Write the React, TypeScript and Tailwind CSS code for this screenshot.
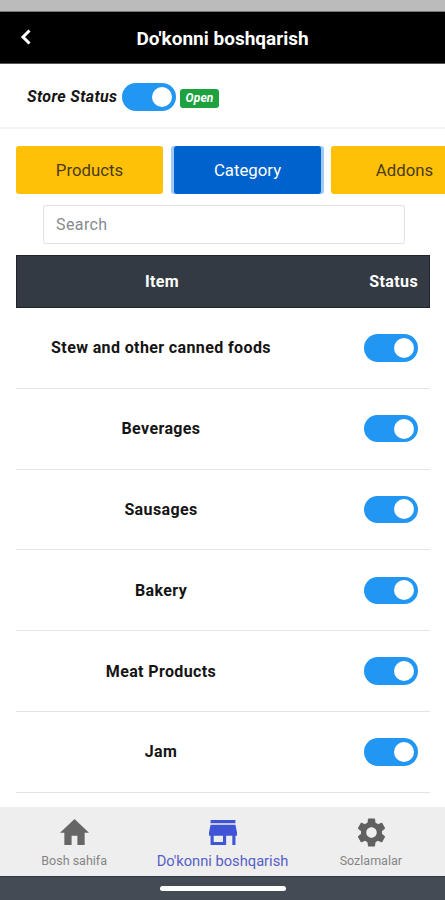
import React from "react";

const items = [
  "Stew and other canned foods",
  "Beverages",
  "Sausages",
  "Bakery",
  "Meat Products",
  "Jam",
];

function Toggle() {
  return (
    <span className="flex h-[27.5px] w-[54px] shrink-0 items-center justify-end rounded-full bg-[#2196f3] pr-[3.5px]">
      <span className="h-5 w-5 rounded-full bg-white" />
    </span>
  );
}

export default function App() {
  return (
    <div className="flex h-[900px] w-[445px] flex-col overflow-hidden bg-white font-['Roboto',sans-serif] text-[#151515]">
      <div className="h-3 shrink-0 border-b border-[#777] bg-[#bbbbbb]" />
      <header className="grid h-[52px] shrink-0 grid-cols-[58px_1fr_58px] items-center border-b border-[#555] bg-black">
        <svg viewBox="0 0 12 18" className="ml-5 h-[18px] w-3 -translate-y-[1px]" fill="none" stroke="#fff" strokeWidth="3">
          <path d="M9.5 2.5 3 9l6.500 6.500" />
        </svg>
        <h1 className="pt-[2px] text-center text-[19px] leading-6 font-bold whitespace-nowrap text-white">Do'konni boshqarish</h1>
      </header>

      <section className="flex h-[65px] shrink-0 items-center border-b-2 border-[#f3f3f3] pt-[3px] pl-[27px]">
        <span className="mr-[3.5px] w-[91px] pb-[1px] text-[16px] font-bold tracking-[0.35px] whitespace-nowrap italic">Store Status</span>
        <Toggle />
        <span className="mt-[2px] ml-[4.5px] flex h-[19px] w-[39px] items-center justify-center rounded-[3px] bg-[#1da23f] text-[12px] font-bold tracking-[0.2px] text-white italic">Open</span>
      </section>

      <nav className="mt-[17px] flex h-12 shrink-0 gap-[11px] pl-4 text-[16.8px]">
        <button className="w-[147px] shrink-0 rounded-[3px] bg-[#ffc107] pt-[1px] text-[#4b3b16]">Products</button>
        <button className="w-[147px] shrink-0 rounded-[3px] bg-[#0062cc] pt-[1px] text-white shadow-[-3px_0_0_#9fcaf8,3px_0_0_#9fcaf8]">Category</button>
        <button className="-ml-[1px] w-[147px] shrink-0 rounded-[3px] bg-[#ffc107] pt-[1px] text-[#4b3b16]">Addons</button>
      </nav>

      <input
        placeholder="Search"
        className="mt-[11px] ml-[43px] h-[39px] w-[362px] shrink-0 rounded-[3px] border border-[#dfe1e4] px-3 text-[16px] tracking-[0.4px] placeholder:text-[#858a8f]"
      />

      <main className="mt-[11px] mr-[15px] ml-4 shrink-0 text-[16px] font-bold tracking-[0.38px]">
        <div className="grid h-[53px] grid-cols-[290px_1fr] items-center border border-[#20242a] bg-[#343a43] text-white">
          <span className="text-center">Item</span>
          <span className="pr-[11px] text-right">Status</span>
        </div>
        {items.map((item) => (
          <div key={item} className="grid h-[80.8px] grid-cols-[290px_1fr] items-center border-b border-[#e2e4e6]">
            <span className="pt-[1px] text-center whitespace-nowrap">{item}</span>
            <span className="flex justify-end pr-[12.5px]">
              <Toggle />
            </span>
          </div>
        ))}
      </main>

      <footer className="mt-auto grid h-[69px] shrink-0 grid-cols-3 bg-[#eeeeee] pt-[10px] text-[12.5px] text-[#858585]">
        <div className="flex flex-col items-center">
          <svg viewBox="2 3 20 17" className="mt-[2px] h-[26px] w-[29px]" fill="#666" preserveAspectRatio="none">
            <path d="M10 20v-6h4v6h5v-8h3L12 3 2 12h3v8z" />
          </svg>
          <span className="mt-[8px] leading-4">Bosh sahifa</span>
        </div>
        <div className="flex flex-col items-center text-[14.7px] text-[#5560c8]">
          <svg viewBox="3 4 18 16" className="mt-[3px] ml-[1px] h-[25px] w-[28px]" fill="#3f55d6" preserveAspectRatio="none">
            <path d="M20 4H4v2h16V4zm1 10v-2l-1-5H4l-1 5v2h1v6h10v-6h4v6h2v-6h1zm-9 4H6v-4h6v4z" />
          </svg>
          <span className="mt-[8px] leading-4 whitespace-nowrap">Do'konni boshqarish</span>
        </div>
        <div className="flex flex-col items-center">
          <svg viewBox="0 0 24 24" className="-mt-[2px] ml-[1px] h-[35px] w-[35px]" fill="#606060">
            <path d="M19.14 12.94c.04-.3.06-.61.06-.94 0-.32-.02-.64-.07-.94l2.03-1.58a.49.49 0 0 0 .12-.61l-1.92-3.32a.488.488 0 0 0-.59-.22l-2.39.96c-.5-.38-1.03-.7-1.62-.94l-.36-2.54a.484.484 0 0 0-.48-.41h-3.84c-.24 0-.43.17-.47.41l-.36 2.54c-.59.24-1.13.57-1.62.94l-2.39-.96c-.22-.08-.47 0-.59.22L2.74 8.87c-.12.21-.08.47.12.61l2.03 1.58c-.05.3-.09.63-.09.94s.02.64.07.94l-2.03 1.58a.49.49 0 0 0-.12.61l1.92 3.32c.12.22.37.29.59.22l2.39-.96c.5.38 1.03.7 1.62.94l.36 2.54c.05.24.24.41.48.41h3.84c.24 0 .44-.17.47-.41l.36-2.54c.59-.24 1.13-.56 1.62-.94l2.39.96c.22.08.47 0 .59-.22l1.92-3.32c.12-.22.07-.47-.12-.61l-2.01-1.58zM12 15.6c-1.98 0-3.6-1.62-3.6-3.6s1.620-3.6 3.6-3.6 3.6 1.62 3.6 3.6-1.62 3.6-3.6 3.6z" />
          </svg>
          <span className="mt-[3px] leading-4">Sozlamalar</span>
        </div>
      </footer>
      <div className="flex h-6 shrink-0 justify-center border-t border-[#303940] bg-[#434b55] pt-[9px]">
        <div className="h-[5px] w-[126px] rounded-full bg-white" />
      </div>
    </div>
  );
}
